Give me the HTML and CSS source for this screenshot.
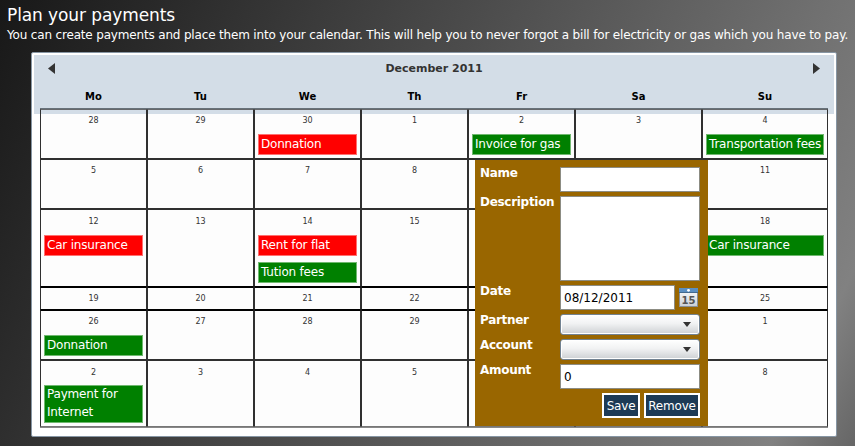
FILE: index.html
```html
<!DOCTYPE html>
<html lang="en">
<head>
<meta charset="utf-8">
<title>Plan your payments</title>
<link rel="stylesheet" href="styles.css">
</head>
<body>
<h1>Plan your payments</h1>
<p class="intro">You can create payments and place them into your calendar. This will help you to never forgot a bill for electricity or gas which you have to pay.</p>
<main class="calendar">
  <header class="head">
    <div class="month">
      <svg width="7" height="11" viewBox="0 0 7 11"><path d="M7 0V11L0 5.5Z" fill="#333"/></svg>
      <span>December 2011</span>
      <svg width="7" height="11" viewBox="0 0 7 11"><path d="M0 0V11L7 5.5Z" fill="#333"/></svg>
    </div>
    <div class="days"><span>Mo</span><span>Tu</span><span>We</span><span>Th</span><span>Fr</span><span>Sa</span><span>Su</span></div>
  </header>
  <div class="grid">
    <div class="cell"><b>28</b></div><div class="cell"><b>29</b></div><div class="cell"><b>30</b><div class="item due">Donnation</div></div><div class="cell"><b>1</b></div><div class="cell"><b>2</b><div class="item">Invoice for gas</div></div><div class="cell"><b>3</b></div><div class="cell"><b>4</b><div class="item wide">Transportation fees</div></div>
    <div class="cell"><b>5</b></div><div class="cell"><b>6</b></div><div class="cell"><b>7</b></div><div class="cell"><b>8</b></div><div class="cell"></div><div class="cell"></div><div class="cell"><b>11</b></div>
    <div class="cell"><b>12</b><div class="item due">Car insurance</div></div><div class="cell"><b>13</b></div><div class="cell"><b>14</b><div class="item due">Rent for flat</div><div class="item">Tution fees</div></div><div class="cell"><b>15</b></div><div class="cell"></div><div class="cell"></div><div class="cell"><b>18</b><div class="item wide">Car insurance</div></div>
    <div class="cell"><b>19</b></div><div class="cell"><b>20</b></div><div class="cell"><b>21</b></div><div class="cell"><b>22</b></div><div class="cell"></div><div class="cell"></div><div class="cell"><b>25</b></div>
    <div class="cell"><b>26</b><div class="item">Donnation</div></div><div class="cell"><b>27</b></div><div class="cell"><b>28</b></div><div class="cell"><b>29</b></div><div class="cell"></div><div class="cell"></div><div class="cell"><b>1</b></div>
    <div class="cell"><b>2</b><div class="item">Payment for Internet</div></div><div class="cell"><b>3</b></div><div class="cell"><b>4</b></div><div class="cell"><b>5</b></div><div class="cell"></div><div class="cell"></div><div class="cell"><b>8</b></div>
  </div>
  <form class="popup">
    <label>Name</label><div class="field"></div>
    <label>Description</label><div class="field"></div>
    <label>Date</label>
    <div class="date"><div class="field">08/12/2011</div>
      <svg width="19" height="19" viewBox="0 0 19 19">
        <defs><linearGradient id="page" x2="0" y2="1"><stop offset="0" stop-color="#fff"/><stop offset="1" stop-color="#c9ced5"/></linearGradient></defs>
        <rect x=".5" y=".5" width="18" height="18" fill="url(#page)" stroke="#8a8f96"/>
        <rect width="19" height="4" fill="#5b8fc2"/><rect y="4" width="19" height="1" fill="#42698f"/>
        <circle cx="9.5" cy="2.3" r="1.4" fill="#fff"/>
        <text x="9.5" y="16" text-anchor="middle" class="icon-day">15</text>
      </svg>
    </div>
    <label>Partner</label><div class="select"><i></i></div>
    <label>Account</label><div class="select"><i></i></div>
    <label>Amount</label><div class="field">0</div>
    <div class="actions"><button type="button" class="save">Save</button><button type="button" class="remove">Remove</button></div>
  </form>
</main>
</body>
</html>
```
FILE: styles.css
```css
* { box-sizing: border-box; }
body {
  margin: 0;
  height: 446px;
  overflow: hidden;
  padding: 5px 0 0 7px;
  font: 12px/18px "DejaVu Sans", sans-serif;
  color: #fff;
  background: linear-gradient(115.6deg, #181818 0%, #818181 92%, #666 100%);
}
h1 { margin: 0; font-size: 17px; line-height: 21px; font-weight: 400; letter-spacing: -.1px; }
.intro { margin: 0; padding-top: 1px; line-height: 17px; white-space: nowrap; letter-spacing: -.17px; }
.calendar {
  position: relative;
  width: 806px;
  height: 385px;
  margin: 8px 0 0 24px;
  padding: 2px;
  border: 1px solid #8796a4;
  border-radius: 2px;
  background: #fff;
}
.head { height: 59px; padding: 7px 6px 0; background: #d3dde7; }
.month { display: flex; justify-content: space-between; align-items: center; height: 12px; padding: 0 8px; }
.month span { padding-top: 2px; color: #333; font-size: 11px; font-weight: 700; line-height: 14px; }
.days, .grid { display: grid; grid-template-columns: repeat(5, 107px) 127px 126px; }
.days { margin-top: 16px; text-align: center; color: #000; font-size: 10px; font-weight: 700; line-height: 14px; }
.grid {
  position: relative;
  width: 788px;
  margin: -6px 0 0 6px;
  grid-template-rows: 50px 50px 78px 23px 50px 67px;
  border-top: 1px solid #67717a;
  border-bottom: 1px solid #888;
}
.cell { padding: 5px 3px 0; border: 1px solid #303030; background: #fdfdfd; }
.cell:nth-child(-n+7) { border-top-color: #66686b; background: linear-gradient(#d3dde7 4px, #fdfdfd 4px); }
.cell:nth-child(n+15):nth-child(-n+21) { padding-top: 6px; border-bottom-color: #000; }
.cell:nth-child(n+22):nth-child(-n+28) { border-top-color: #000; border-bottom-color: #000; }
.cell:nth-child(n+29):nth-child(-n+35) { border-top-color: #000; }
.cell:nth-child(n+36) { padding-top: 6px; border-bottom-color: #777; }
.cell b { display: block; height: 11px; text-align: center; font-size: 8px; font-weight: 400; line-height: 11px; color: #333; }
.item { width: 99px; margin: 8px 0 6px; padding: 0 1px 1px 2px; border: 1px solid #70b870; background: #008000; line-height: 18px; letter-spacing: -.19px; }
.item.wide { width: 118px; white-space: nowrap; }
.item.due { border-color: #ff7070; background: #f00; }
.item + .item { margin-top: 0; }
.cell:nth-child(n+36) .item { margin-top: 7px; line-height: 17.5px; }
.popup {
  position: absolute;
  left: 443px;
  top: 107px;
  width: 233px;
  height: 266px;
  padding: 7px 8px 7px 5px;
  display: grid;
  grid-template-columns: 80px 140px;
  grid-template-rows: 25px 85px 25px 21px 21px 25px 25px;
  row-gap: 4px;
  background: #960;
}
.popup label { margin-top: -1px; font-size: 12px; font-weight: 700; line-height: 14px; letter-spacing: -.3px; }
.field { padding: 4px 3px; border: 1px solid #8c8c83; background: #fff; color: #000; line-height: 17px; }
.date { display: flex; gap: 4px; align-items: center; }
.date .field { width: 115px; height: 25px; }
.icon-day { font: 700 10px "DejaVu Sans"; fill: #555; }
.select { display: flex; justify-content: flex-end; align-items: center; padding-right: 8px; border: 1px solid #728291; border-radius: 3px; background: linear-gradient(#fff, #f1f2f3 45%, #cdd0d3); box-shadow: inset 0 0 0 1px #fff; }
.select i { border: 4px solid transparent; border-top: 5px solid #333; border-bottom: 0; }
.actions { grid-column: 1 / 3; display: flex; justify-content: flex-end; gap: 4px; }
button { height: 25px; padding: 0; border: 2px solid #fff; background: #1d3a55; color: #fff; font: 12px/18px "DejaVu Sans", sans-serif; letter-spacing: -.2px; }
.save { width: 38px; }
.remove { width: 56px; }
```
